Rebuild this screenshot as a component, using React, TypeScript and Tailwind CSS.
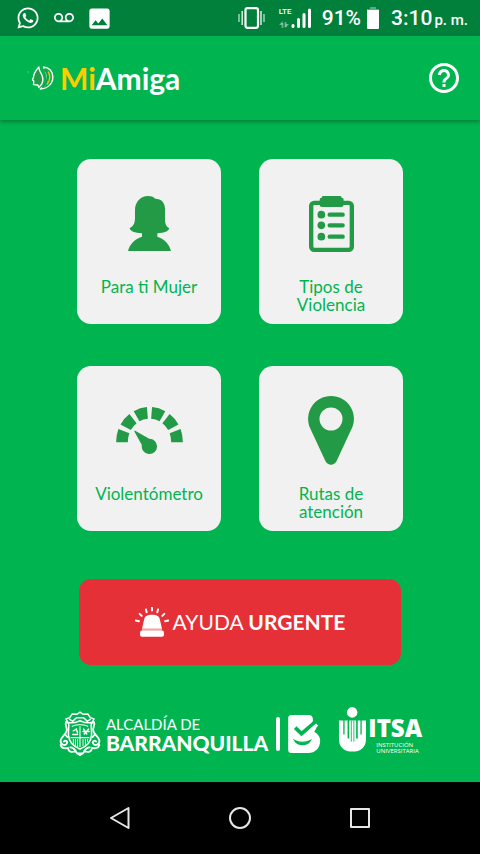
import { FaWhatsapp } from "react-icons/fa";
import { MdImage, MdHelpOutline, MdVoicemail } from "react-icons/md";
import type { ReactNode } from "react";

function VibrateIcon() {
  return (
    <svg viewBox="0 0 27 22" className="h-[22px] w-[27px]" fill="none" stroke="#fff">
      <rect x="7.5" y="1.2" width="12.5" height="19.6" rx="2" strokeWidth="2.2" />
      <path d="M4.2 4v14M23 4v14" strokeWidth="1.6" opacity=".8" />
      <path d="M1 7v8M26 7v8" strokeWidth="1.6" opacity=".6" />
    </svg>
  );
}

function SignalIcon() {
  return (
    <svg viewBox="0 0 33 21" className="h-[21px] w-[33px]" fill="none" stroke="#fff">
      <path d="M3.5 20v-5M6.5 14v5" strokeWidth="1.8" opacity=".4" />
      <path d="M0 17l3.5-4v4zM10 16l-3.5 4v-4z" fill="#fff" stroke="none" opacity=".4" />
      <path d="M14 18.5v-1M19.5 18.5v-7M25 18.5v-12M30.5 18.5V2" strokeLinecap="round" strokeWidth="3" />
    </svg>
  );
}

function BatteryIcon() {
  return (
    <svg viewBox="0 0 12 22" className="h-[22px] w-3" fill="#fff">
      <path d="M3 0h6v2h3v2H0V2h3z" opacity=".35" />
      <path d="M0 3h12v18a1 1 0 0 1-1 1H1a1 1 0 0 1-1-1z" />
    </svg>
  );
}

function StatusBar() {
  return (
    <div className="flex h-9 items-center justify-between bg-[#00803a] pr-3 pl-4 font-['Roboto',sans-serif] text-white">
      <div className="flex items-center">
        <FaWhatsapp className="size-6" />
        <MdVoicemail className="ml-3.5 size-5" />
        <MdImage className="ml-3 size-[27px]" />
      </div>
      <div className="flex items-center">
        <VibrateIcon />
        <div className="relative ml-3.5">
          <SignalIcon />
          <span className="absolute -top-px left-0 text-[8px] leading-[10px] font-medium">LTE</span>
        </div>
        <span className="ml-2.5 pt-0.5 text-[21px] font-medium">91%</span>
        <span className="ml-1.5">
          <BatteryIcon />
        </span>
        <p className="ml-3 pt-0.5 text-[21px] font-medium">
          3:10<span className="ml-0.5 text-[15px]">p. m.</span>
        </p>
      </div>
    </div>
  );
}

function FaceLogo() {
  return (
    <svg viewBox="0 0 80 72" className="h-6 w-[27px]" fill="none" stroke="#fff" strokeWidth="4" strokeLinejoin="round">
      <path d="M1 18h4" strokeWidth="2" opacity=".7" />
      <path d="M35 3C27 12 19 22 19 34l-3 8 4 3-1 11 13 1 3 7 9-10c4-8 4-16 1-25-4-9-10-15-10-26z" fill="#239a45" />
      <path d="M49 3c17 1 28 13 28 30 0 20-15 35-38 36 9-5 17-13 21-23 4-14-3-28-11-43z" />
      <path d="M51 9c14 14 16 34-6 56" stroke="#239a45" strokeWidth="6" />
      <path d="M63 17c7 12 5 27-3 38" stroke="#f5c400" />
    </svg>
  );
}

function Header() {
  return (
    <header className="flex h-[84px] items-center justify-between pr-5 pl-[27px] shadow-[0_2px_4px_rgba(0,0,0,0.3)]">
      <div className="flex items-center gap-1.5">
        <FaceLogo />
        <h1 className="text-[30px] leading-9 font-bold text-white">
          <span className="text-[#fc0]">Mi</span>Amiga
        </h1>
      </div>
      <button aria-label="Ayuda" className="-mr-0.5 text-white">
        <MdHelpOutline className="size-9" />
      </button>
    </header>
  );
}

function WomanIcon() {
  return (
    <svg viewBox="0 0 129 165" className="h-[55px] w-[43px]" fill="currentColor">
      <path d="M60 0C38 0 21 18 21 42v22c0 18-4 26-16 33 1 8 15 14 37 15v10C20 129 5 145 0 165h129c-5-20-19-36-41-43v-10c22-1 34-7 36-15-11-6-13-14-13-30V38c0-18-11-30-29-30C76 2 69 0 60 0z" />
    </svg>
  );
}

function ClipboardIcon() {
  return (
    <svg viewBox="0 0 135 168" className="h-14 w-[45px]" fill="currentColor">
      <rect x="6.5" y="20.5" width="122" height="141" rx="9" fill="none" stroke="currentColor" strokeWidth="13" />
      <path d="M42 0h51a5 5 0 0 1 5 5h0a6 6 0 0 1 6 6v15a7 7 0 0 1-7 7H39a7 7 0 0 1-7-7V11a6 6 0 0 1 6-6 5 5 0 0 1 4-5z" />
      <circle cx="37" cy="56" r="11.5" />
      <circle cx="37" cy="88" r="11.5" />
      <circle cx="37" cy="122" r="11.5" />
      <path d="M62 56h39M62 88h39M62 122h39" stroke="currentColor" strokeWidth="13" strokeLinecap="round" />
    </svg>
  );
}

function GaugeIcon() {
  return (
    <svg viewBox="0 0 200 141" className="h-[47px] w-[67px]" fill="currentColor">
      <path
        d="M17.5 106V104a82.5 86.5 0 0 1 165 0v2"
        fill="none"
        stroke="currentColor"
        strokeWidth="35"
        pathLength="260"
        strokeDasharray="33 12.4"
      />
      <path d="M57 71c-2-1-3 1-2 3l22 40a23 23 0 1 0 22-19z" />
    </svg>
  );
}

function PinIcon() {
  return (
    <svg viewBox="0 0 137 207" className="h-[69px] w-[46px]" fill="currentColor" fillRule="evenodd">
      <path d="M68.5 0A68.5 68.5 0 0 0 6 97l46 99c7 14 26 14 33 0l46-99A68.5 68.5 0 0 0 68.5 0zm0 34.5a34.5 34.5 0 1 1 0 69 34.5 34.5 0 0 1 0-69z" />
    </svg>
  );
}

function SirenIcon() {
  return (
    <svg viewBox="0 0 102 89" className="h-[30px] w-[34px]" fill="#fff">
      <path d="M21 65l7-30c3-9 9-12 23-12s20 3 23 12l7 30z" />
      <path d="M21 65h60v6H21z" opacity=".55" />
      <rect x="15" y="70" width="72" height="19" rx="6" />
      <path
        d="M51 2v8M33 7l2 8M69 7l-2 8M14 20l6 6M88 20l-6 6M2 40l10 2M100 40l-10 2"
        stroke="#fff"
        strokeWidth="6"
        strokeLinecap="round"
      />
    </svg>
  );
}

function CrestIcon() {
  return (
    <svg viewBox="0 0 144 152" className="h-[46px] w-11" fill="none" stroke="#fff" strokeWidth="5" strokeLinecap="round">
      <path d="M32 40l-6-14 12-4 8-12 16 1 10-7 10 7 16-1 8 12 12 4-6 14M38 28l10 6 12-12h24l12 12 10-6" />
      <path d="M34 38c18 4 24 0 38-6 14 6 20 10 38 6-4 16 2 24 0 42-1 26-20 38-38 46-18-8-37-20-38-46-2-18 4-26 0-42z" />
      <path d="M26 36c-6 12 6 18 2 30-4 14-18 18-20 32-1 14 14 18 20 10 5-8-5-13-9-7M118 36c6 12-6 18-2 30 4 14 18 18 20 32 1 14-14 18-20 10-5-8 5-13 9-7" strokeWidth="6" />
      <path d="M8 112c4 14 18 12 24 10 2 14 14 16 24 10 4 8 10 12 16 14 6-2 12-6 16-14 10 6 22 4 24-10 6 2 20 4 24-10" strokeWidth="6" />
      <path d="M40 120c8 0 14 6 18 12M104 120c-8 0-14 6-18 12M22 76l8 10M122 76l-8 10M64 140h16" strokeWidth="6" />
      <path d="M46 50c18-6 34-6 52 0M42 88h60M72 52v66" strokeWidth="3.500" />
      <path d="M48 78h16M50 66l10-6 4 12M84 60l10 16M100 60L86 76M82 68h20" />
      <path d="M50 94v14M57 94v20M64 94v24M82 94v20M90 94v16M97 94v8" strokeWidth="3" />
    </svg>
  );
}

function BrandIcon() {
  return (
    <svg viewBox="0 0 98 114" className="h-[38px] w-[33px]">
      <path d="M10 0h52c9 0 14 8 12 19l-5 10 14-4c5 10 1 18-5 25 12 6 18 16 18 27 0 22-15 37-36 37H10c-7 0-10-4-10-10V10C0 4 3 0 10 0z" fill="#fff" />
      <path d="M21 38l19 18 46-39" fill="none" stroke="#00b550" strokeWidth="11" />
      <path d="M64 49L87 29" stroke="#fff" strokeWidth="9" />
      <path d="M20 77c10 16 36 16 46 0-13 7-33 7-46 0z" fill="#00b550" stroke="#00b550" strokeWidth="4" />
    </svg>
  );
}

function ItsaIcon() {
  return (
    <svg viewBox="0 0 82 136" className="h-[45px] w-[27px]" fill="#fff">
      <circle cx="40" cy="16" r="16" />
      <path d="M0 41h13v42h4V41h9v54h5V41h21v54h5V41h8v42h4V41h13v57c0 24-17 37-41 37S0 122 0 98z" />
      <path d="M36 41h2.500v64H36zM44 41h2.500v64H44z" fill="#00b550" />
    </svg>
  );
}

interface MenuItem {
  label: string;
  icon: ReactNode;
}

const items: MenuItem[] = [
  { label: "Para ti Mujer", icon: <WomanIcon /> },
  { label: "Tipos de Violencia", icon: <ClipboardIcon /> },
  { label: "Violentómetro", icon: <GaugeIcon /> },
  { label: "Rutas de atención", icon: <PinIcon /> },
];

function MenuCard({ label, icon }: MenuItem) {
  return (
    <button className="flex h-[165px] flex-col items-center rounded-[14px] bg-[#f1f1f1] px-4 pt-[29px] text-[#00b550]">
      <span className="flex h-[71px] items-center text-[#239a45]">{icon}</span>
      <span className="mt-[19px] text-[17px] leading-[18px]">{label}</span>
    </button>
  );
}

function Sponsors() {
  return (
    <footer className="flex items-center justify-center pt-[42px] pb-5 text-white">
      <CrestIcon />
      <div className="ml-1">
        <p className="text-[15px] leading-[18px]">ALCALDÍA DE</p>
        <p className="text-[21px] leading-5 font-black">BARRANQUILLA</p>
      </div>
      <span className="ml-2 h-[34px] w-1 rounded-sm bg-white" />
      <span className="ml-2">
        <BrandIcon />
      </span>
      <span className="ml-[18px] pb-2">
        <ItsaIcon />
      </span>
      <div className="ml-0.5 font-['Open_Sans',sans-serif]">
        <p className="text-[24px] leading-7 font-extrabold">ITSA</p>
        <p className="ml-2 text-[6px] leading-[6px]">
          INSTITUCIÓN
          <br />
          UNIVERSITARIA
        </p>
      </div>
    </footer>
  );
}

function NavBar() {
  return (
    <nav className="flex h-[72px] items-center justify-center gap-24 bg-black text-[#e6e6e6]">
      <button aria-label="Atrás">
        <svg viewBox="0 0 24 24" className="size-6" fill="none" stroke="currentColor" strokeWidth="2" strokeLinejoin="round">
          <path d="M20.5 2v20L3 12z" />
        </svg>
      </button>
      <button aria-label="Inicio">
        <svg viewBox="0 0 24 24" className="size-6" fill="none" stroke="currentColor" strokeWidth="2">
          <circle cx="12" cy="12" r="10" />
        </svg>
      </button>
      <button aria-label="Recientes">
        <svg viewBox="0 0 24 24" className="size-6" fill="none" stroke="currentColor" strokeWidth="2" strokeLinejoin="round">
          <rect x="3" y="3" width="18" height="18" />
        </svg>
      </button>
    </nav>
  );
}

export default function App() {
  return (
    <div className="flex min-h-screen flex-col bg-[#00b550] font-['Lato',sans-serif]">
      <StatusBar />
      <Header />
      <main className="flex-1">
        <div className="grid grid-cols-2 gap-x-[38px] gap-y-[42px] px-[77px] pt-[39px]">
          {items.map((item) => (
            <MenuCard key={item.label} {...item} />
          ))}
        </div>
        <div className="px-[79px] pt-12">
          <button className="flex h-[86px] w-full items-center justify-center gap-1 rounded-[12px] bg-[#e63037] text-[21px] text-white">
            <SirenIcon />
            <span>
              AYUDA <b>URGENTE</b>
            </span>
          </button>
        </div>
        <Sponsors />
      </main>
      <NavBar />
    </div>
  );
}
